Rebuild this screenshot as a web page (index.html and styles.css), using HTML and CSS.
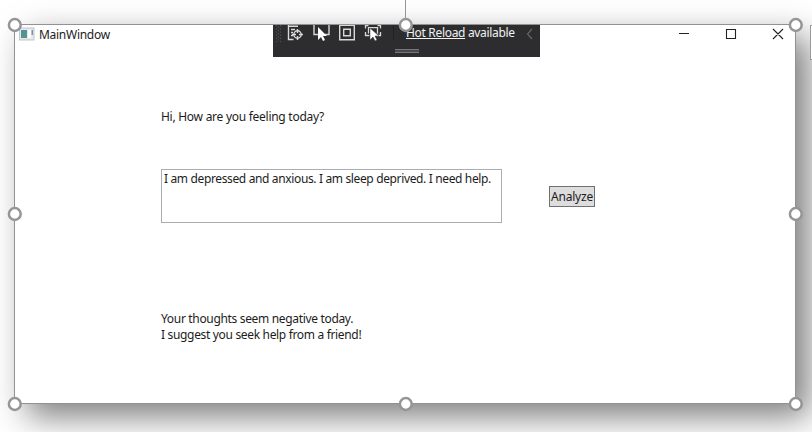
FILE: index.html
```html
<!DOCTYPE html>
<html lang="en">
<head>
<meta charset="utf-8">
<title>MainWindow</title>
<link rel="stylesheet" href="styles.css">
</head>
<body>
<div class="window">
  <header class="titlebar">
    <svg class="app-icon" width="16" height="14" viewBox="0 0 16 14">
      <defs><linearGradient id="g" x2="1" y2="1"><stop stop-color="#5d86b2"/><stop offset="1" stop-color="#4ba078"/></linearGradient></defs>
      <rect x=".5" y="1" width="14.500" height="12" fill="#e6e8ea" stroke="#c3c7ca"/>
      <rect x="2" y="3" width="6" height="8" fill="url(#g)"/>
      <rect x="9" y="3" width="3" height="8" fill="#fff"/>
      <rect x="12.500" y="3" width="1.500" height="5" fill="#659fa4"/>
    </svg>
    <span class="title">MainWindow</span>
    <svg class="controls" width="110" height="14" viewBox="0 0 110 14" fill="none" stroke="#222" stroke-width="1.1">
      <path d="M1 6.500h10M48.500 2.500h9v9h-9zM95 2l10 10M105 2l-10 10"/>
    </svg>
  </header>
  <main class="content">
    <p class="question">Hi, How are you feeling today?</p>
    <div class="entry">
      <div class="input"><span>I am depressed and anxious. I am sleep deprived. I need help.</span></div>
      <button class="analyze" type="button">Analyze</button>
    </div>
    <div class="answer">
      <p>Your thoughts seem negative today.</p>
      <p>I suggest you seek help from a friend!</p>
    </div>
  </main>
  <div class="toolbar">
    <svg class="tools" width="130" height="32" viewBox="0 0 130 32" fill="none" stroke="#d8d8d8" stroke-width="1.400">
      <g stroke="#555" stroke-width="1.200" stroke-dasharray="1.200 2"><path d="M3.500 0v17M7.500 0v17"/><path d="M5.500 1.600v15"/></g>
      <path d="M15.500 0v14.500h5M15 1.200h10M18 4.500h4M18 7.500h2M18 10.500h2"/>
      <circle cx="24.500" cy="9.500" r="3.700"/><path d="M24.500 4v4M24.500 11v4M19 9.500h4M26 9.500h4"/>
      <path d="M41 0v9.500h4M56 0v9.500h-4"/>
      <path d="M45 2v13l3-3 2 4 2-1-2-4h4z" fill="#fff" stroke="none"/>
      <path d="M66.700 0v14.800h14.600V0M66.700.3h14.600M70.700 4.200h6.600v6.600h-6.600z"/>
      <path d="M92.500 3.500V.5h3M107.500 3.500V.5h-3M95.500 8.500V2.700h9v6M92.500 7v3.500h4M107.500 7v3.500h-4" stroke-width="1.300"/>
      <path d="M97 3v12l3-3 2 4 2-1-2-4h4z" fill="#fff" stroke="#2d2d30" stroke-width=".5"/>
      <path d="M120.500 0v15" stroke="#222" stroke-width="1"/>
    </svg>
    <span class="reload"><u>Hot Reload</u> available</span>
    <svg class="chevron" width="8" height="12" viewBox="0 0 8 12" fill="none" stroke="#666" stroke-width="1.200"><path d="M6 1 1.500 6 6 11"/></svg>
    <i class="grip"></i>
  </div>
</div>
<div class="side-panel"></div>
<svg class="selection" width="812" height="432" viewBox="0 0 812 432" fill="#fff" stroke="#959595" stroke-width="2.500">
  <path d="M405.500 0v20" stroke-width="1"/>
  <circle cx="14.800" cy="25" r="5.900"/><circle cx="405.800" cy="25" r="5.900"/><circle cx="795.800" cy="25" r="5.900"/>
  <circle cx="14.800" cy="214" r="5.900"/><circle cx="795.800" cy="214" r="5.900"/>
  <circle cx="14.800" cy="404" r="5.900"/><circle cx="405.800" cy="404" r="5.900"/><circle cx="795.800" cy="404" r="5.900"/>
</svg>
</body>
</html>
```
FILE: styles.css
```css
* { box-sizing: border-box; }
body {
  margin: 0;
  height: 432px;
  padding: 24px 0 0 14px;
  position: relative;
  overflow: hidden;
  background: #fff;
  color: #1c1c1c;
  font: 12px/16px "Noto Sans", "Open Sans", sans-serif;
}
p { margin: 0; white-space: nowrap; }
.window {
  position: relative;
  width: 782px;
  height: 380px;
  border: 1px solid #929292;
  background: #fff;
  box-shadow: 13px 13px 31px rgba(0, 0, 0, .5);
}
.titlebar { display: flex; align-items: center; height: 18px; padding-left: 4px; }
.title { margin-left: 4px; padding-top: 2px; letter-spacing: -.28px; }
.controls { margin-left: auto; margin-right: 7px; }
.content { padding: 66px 0 0 146px; }
.question { letter-spacing: -.27px; }
.entry { display: flex; margin-top: 44px; }
.input {
  width: 341px;
  height: 54px;
  padding: 1px 2px;
  border: 1px solid #abadb3;
  white-space: nowrap;
  letter-spacing: -.36px;
}
.analyze {
  width: 46px;
  height: 21px;
  margin: 17px 0 0 47px;
  padding: 0;
  border: 1px solid #707070;
  background: #ddd;
  color: inherit;
  font: inherit;
  line-height: 19px;
  letter-spacing: -.2px;
}
.answer { margin-top: 88px; letter-spacing: -.33px; }
.toolbar {
  position: absolute;
  left: 258px;
  top: 0;
  display: flex;
  align-items: flex-start;
  width: 267px;
  height: 32px;
  background: #2d2d30;
  color: #f1f1f1;
}
.reload { margin-left: 3px; white-space: nowrap; letter-spacing: -.32px; }
.chevron { position: absolute; right: 6px; top: 3px; }
.grip {
  position: absolute;
  left: 122px;
  top: 24px;
  width: 24px;
  height: 4px;
  border: solid #77777a;
  border-width: 1px 0;
  background: #49494c;
}
.side-panel {
  position: absolute;
  left: 810px;
  top: 25px;
  width: 10px;
  height: 35px;
  border: 1px solid #999;
  background: #fff;
}
.selection { position: absolute; left: 0; top: 0; }
```
